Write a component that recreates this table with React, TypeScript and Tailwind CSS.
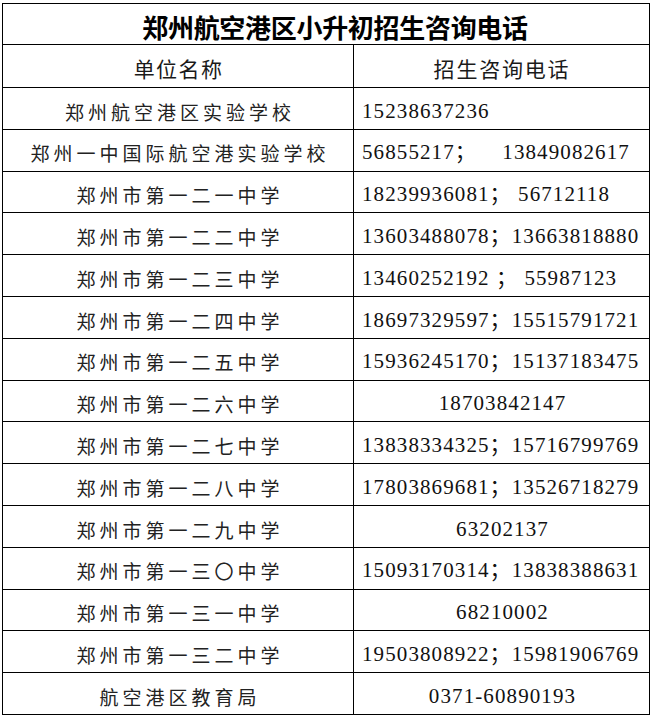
import React from "react";

type Row = { name: string; phone: string; center?: boolean };

const rows: Row[] = [
  { name: "郑州航空港区实验学校", phone: "15238637236" },
  { name: "郑州一中国际航空港实验学校", phone: "56855217；    13849082617" },
  { name: "郑州市第一二一中学", phone: "18239936081； 56712118" },
  { name: "郑州市第一二二中学", phone: "13603488078；13663818880" },
  { name: "郑州市第一二三中学", phone: "13460252192 ； 55987123" },
  { name: "郑州市第一二四中学", phone: "18697329597；15515791721" },
  { name: "郑州市第一二五中学", phone: "15936245170；15137183475" },
  { name: "郑州市第一二六中学", phone: "18703842147", center: true },
  { name: "郑州市第一二七中学", phone: "13838334325；15716799769" },
  { name: "郑州市第一二八中学", phone: "17803869681；13526718279" },
  { name: "郑州市第一二九中学", phone: "63202137", center: true },
  { name: "郑州市第一三〇中学", phone: "15093170314；13838388631" },
  { name: "郑州市第一三一中学", phone: "68210002", center: true },
  { name: "郑州市第一三二中学", phone: "19503808922；15981906769" },
  { name: "航空港区教育局", phone: "0371-60890193", center: true },
];

const cjk = "font-['Noto_Sans_CJK_SC',sans-serif]";
const num = "font-['Liberation_Serif','Noto_Sans_CJK_SC',serif]";

export default function App() {
  return (
    <div className="min-h-[718px] w-[653px] bg-white pt-[3px] pl-[2px]">
      <div className="grid w-[648px] grid-cols-[351px_296px] border-l border-t border-black text-black">
        <div className={`col-span-2 flex h-[41px] items-center justify-center border-r border-b border-black pt-[4px] pl-[18px] text-[26px] font-bold tracking-[-0.3px] ${cjk}`}>
          郑州航空港区小升初招生咨询电话
        </div>

        <div className={`flex h-[43px] items-center justify-center border-r border-b border-black pt-[5px] pl-[1px] text-[21px] tracking-[1.4px] text-[#1a1a1a] ${cjk}`}>
          单位名称
        </div>
        <div className={`flex h-[43px] items-center justify-center border-r border-b border-black pt-[5px] pl-[1px] text-[21px] tracking-[1.8px] text-[#1a1a1a] ${cjk}`}>
          招生咨询电话
        </div>

        {rows.map(r => (
          <React.Fragment key={r.name}>
            <div className={`flex h-[41.8px] items-center justify-center border-r border-b border-black pt-[7px] pl-[4px] text-[19px] tracking-[4px] text-[#222] ${cjk}`}>
              {r.name}
            </div>
            <div
              className={`flex h-[41.8px] items-center whitespace-pre border-r border-b border-black pt-[6px] text-[21px] tracking-[1.1px] text-[#111] ${num} ${
                r.center ? "justify-center pl-[2px]" : "justify-start pl-[8px]"
              }`}
            >
              {r.phone}
            </div>
          </React.Fragment>
        ))}
      </div>
    </div>
  );
}
